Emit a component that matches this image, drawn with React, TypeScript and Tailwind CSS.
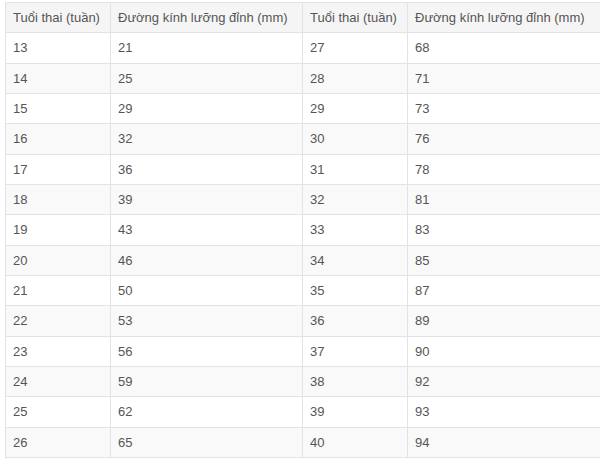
const rows: [string, string, string, string][] = [
  ["13", "21", "27", "68"],
  ["14", "25", "28", "71"],
  ["15", "29", "29", "73"],
  ["16", "32", "30", "76"],
  ["17", "36", "31", "78"],
  ["18", "39", "32", "81"],
  ["19", "43", "33", "83"],
  ["20", "46", "34", "85"],
  ["21", "50", "35", "87"],
  ["22", "53", "36", "89"],
  ["23", "56", "37", "90"],
  ["24", "59", "38", "92"],
  ["25", "62", "39", "93"],
  ["26", "65", "40", "94"],
];

const cell = "border border-[#e3e3e3] px-[7px] h-[30.33px] text-left font-normal align-middle";

export default function App() {
  return (
    <div className="w-[600px] h-[464px] bg-white overflow-hidden pt-[2px] pl-[5px] font-['Liberation_Sans',Arial,sans-serif] text-[13px] text-[#555]">
      <table className="table-fixed border-collapse w-[600px]">
        <colgroup>
          <col className="w-[105px]" />
          <col className="w-[192px]" />
          <col className="w-[105px]" />
          <col className="w-[198px]" />
        </colgroup>
        <thead>
          <tr className="bg-[#f5f5f5]">
            <th className={cell}>Tuổi thai (tuần)</th>
            <th className={cell}>Đường kính lưỡng đỉnh (mm)</th>
            <th className={cell}>Tuổi thai (tuần)</th>
            <th className={cell}>Đường kính lưỡng đỉnh (mm)</th>
          </tr>
        </thead>
        <tbody>
          {rows.map((r, i) => (
            <tr key={r[0]} className={i % 2 === 1 ? "bg-[#f9f9f9]" : "bg-white"}>
              {r.map((v, j) => (
                <td key={j} className={cell}>
                  {v}
                </td>
              ))}
            </tr>
          ))}
        </tbody>
      </table>
    </div>
  );
}
